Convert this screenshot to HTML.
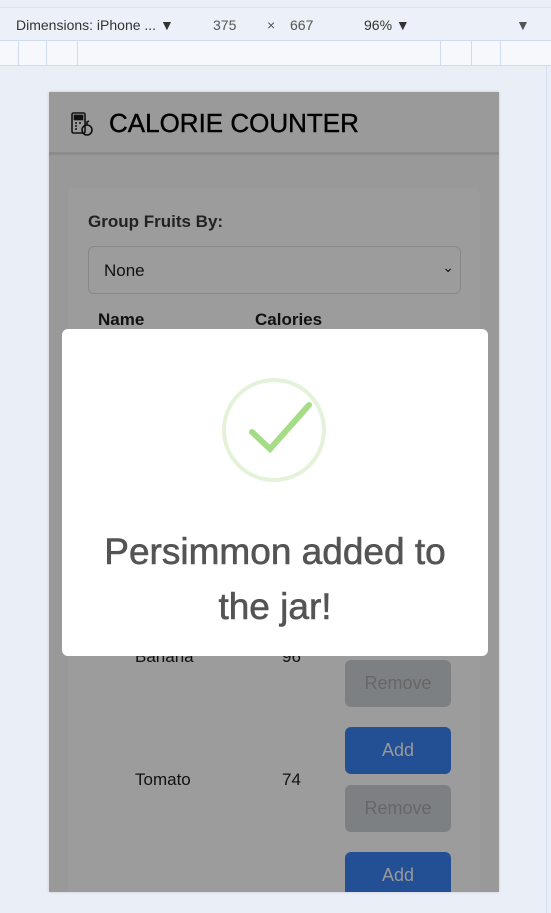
<!DOCTYPE html>
<html><head><style>
*{box-sizing:border-box;margin:0;padding:0}
body{width:551px;height:913px;background:#eaeef7;font-family:"Liberation Sans",sans-serif;position:relative;overflow:hidden}
.tb{position:absolute;left:0;top:7px;width:551px;height:34px;background:#ecf0f8;border-top:1px solid #dde3ee;border-bottom:1px solid #cfdcf3;font-size:14px;color:#333}
.tb span{position:absolute;top:9px}
.ruler{position:absolute;left:0;top:41px;width:551px;height:25px;background:#f6f8fc;border-bottom:1px solid #cfdcf3}
.ruler i{position:absolute;top:0;width:1px;height:25px;background:#cfdcf3}
.scr{position:absolute;left:49px;top:92px;width:450px;height:800px;background:#999;overflow:hidden;box-shadow:0 0 3px rgba(0,0,0,.15)}
.hdr{position:absolute;left:0;top:0;width:450px;height:63px;background:#9a9a9a;border-bottom:3px solid #8c8c8c}
.hdr h1{position:absolute;left:60px;top:16px;font-size:26px;font-weight:normal;color:#000;-webkit-text-stroke:.4px #000}
.card{position:absolute;left:19px;top:96px;width:412px;height:720px;background:#9c9c9c;border-radius:6px}
.lbl{position:absolute;left:39px;top:120px;font-size:17px;font-weight:bold;color:#222}
.sel{position:absolute;left:39px;top:154px;width:373px;height:48px;border:1px solid #888;border-radius:6px;font-size:17px;padding:14px 15px;color:#111}
.th{position:absolute;top:218px;font-size:17px;font-weight:bold;color:#111}
.td{position:absolute;font-size:17px;color:#111}
.btn{position:absolute;left:296px;width:106px;height:47px;border-radius:6px;font-size:18px;text-align:center;line-height:47px}
.rm{background:#7d8082;color:#666}
.ad{background:#234f94;color:#999}
.modal{position:absolute;left:62px;top:329px;width:426px;height:327px;background:#fff;border-radius:6px}
.msg{position:absolute;left:0;top:195px;width:426px;text-align:center;font-size:37px;line-height:55px;color:#545454;-webkit-text-stroke:.6px #545454}
</style></head><body>
<div class="tb"><span style="left:16px">Dimensions: iPhone ... ▼</span><span style="left:213px;color:#555">375</span><span style="left:267px;color:#555">×</span><span style="left:290px;color:#555">667</span><span style="left:364px">96% ▼</span><span style="left:516px;color:#555">▼</span></div>
<div class="ruler"><i style="left:18px"></i><i style="left:46px"></i><i style="left:77px"></i><i style="left:440px"></i><i style="left:471px"></i><i style="left:500px"></i></div>
<div style="position:absolute;left:546px;top:66px;width:1px;height:847px;background:#d6dff0"></div>
<div class="scr">
<div class="hdr">
<svg style="position:absolute;left:21px;top:19px" width="24" height="26" viewBox="0 0 24 26" fill="none" stroke="#111" stroke-width="1.6"><rect x="2" y="2" width="13" height="20" rx="1.5"/><rect x="4.5" y="4.5" width="8" height="4" fill="#111"/><path d="M5 12h2M9 12h2M5 15h2M5 18h2"/><circle cx="17" cy="19" r="5"/><path d="M17 14v-3l2-1"/></svg>
<h1>CALORIE COUNTER</h1></div>
<div class="card"></div>
<div class="lbl">Group Fruits By:</div>
<div class="sel">None<span style="position:absolute;right:6px;top:12px;font-size:14px">⌄</span></div>
<div class="th" style="left:49px">Name</div><div class="th" style="left:206px">Calories</div>
<div class="td" style="left:86px;top:555px">Banana</div><div class="td" style="left:233px;top:555px">96</div>
<div class="btn rm" style="top:568px">Remove</div>
<div class="btn ad" style="top:635px">Add</div>
<div class="td" style="left:86px;top:678px">Tomato</div><div class="td" style="left:233px;top:678px">74</div>
<div class="btn rm" style="top:693px">Remove</div>
<div class="btn ad" style="top:760px">Add</div>
</div>
<div class="modal">
<svg style="position:absolute;left:159px;top:48px" width="108" height="108" viewBox="0 0 108 108"><circle cx="53" cy="53" r="50" fill="none" stroke="#e4f2da" stroke-width="4"/><path d="M31 55l18 17 39-44" fill="none" stroke="#a5dc86" stroke-width="6" stroke-linecap="round"/></svg>
<div class="msg">Persimmon added to<br>the jar!</div>
</div>
</body></html>
